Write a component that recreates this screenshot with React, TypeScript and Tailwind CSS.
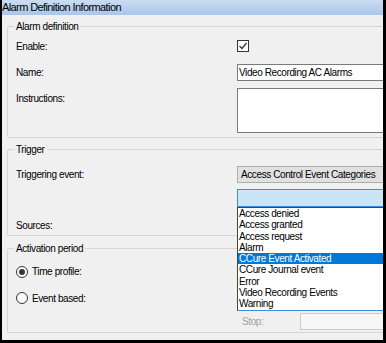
const events = [
  "Access denied",
  "Access granted",
  "Access request",
  "Alarm",
  "CCure Event Activated",
  "CCure Journal event",
  "Error",
  "Video Recording Events",
  "Warning",
];

const font = "font-['Liberation_Sans',Arial,sans-serif]";

const Radio = ({ checked }: { checked?: boolean }) => (
  <span className="w-[12px] h-[12px] rounded-full border border-[#333] bg-white flex items-center justify-center shrink-0">
    {checked && <span className="w-[6px] h-[6px] rounded-full bg-[#333]" />}
  </span>
);

const Legend = ({ children }: { children: React.ReactNode }) => (
  <legend className="ml-[-2px] px-[2px] leading-[13px]">{children}</legend>
);

export default function App() {
  return (
    <div className={`w-[386px] h-[343px] bg-black pl-[2px] pr-[3px] pb-[3px] ${font} text-[10px] tracking-[-0.4px] text-black`}>
      <div className="w-full h-full bg-[#f0f0f0] overflow-hidden flex flex-col">
        <div className="h-[15px] shrink-0 bg-gradient-to-b from-[#cadcf1] to-[#a9c6e9] text-[11px] tracking-[-0.6px] leading-[15px]">
          Alarm Definition Information
        </div>

        <fieldset className="mt-[5px] ml-[5px] w-[420px] shrink-0 border border-[#d5d5d5] rounded-[2px] pl-[8px] pb-[4px]">
          <Legend>Alarm definition</Legend>
          <div className="flex items-center h-[26px]">
            <span className="w-[221px]">Enable:</span>
            <span className="w-[12px] h-[12px] border border-[#333] bg-white flex items-center justify-center">
              <svg width="10" height="10" viewBox="0 0 10 10">
                <polyline points="1.5,5 4,7.5 8.5,2" fill="none" stroke="#333" strokeWidth="1.2" />
              </svg>
            </span>
          </div>
          <div className="flex items-start h-[24px] pt-[5px]">
            <span className="w-[221px] leading-[17px]">Name:</span>
            <div className="w-[180px] h-[17px] border border-[#7a7a7a] bg-white px-[1px] leading-[15px]">
              Video Recording AC Alarms
            </div>
          </div>
          <div className="flex items-start pt-[5px]">
            <span className="w-[221px] pt-[4px] leading-[13px]">Instructions:</span>
            <div className="w-[180px] h-[45px] border border-[#7a7a7a] bg-white" />
          </div>
        </fieldset>

        <fieldset className="mt-[5px] ml-[5px] w-[420px] shrink-0 border border-[#d5d5d5] rounded-[2px] pl-[8px]">
          <Legend>Trigger</Legend>
          <div className="flex items-start pt-[10px]">
            <span className="w-[221px] leading-[17px]">Triggering event:</span>
            <div className="w-[180px] h-[17px] border border-[#adadad] bg-[#e1e1e1] pl-[3px] leading-[15px]">
              Access Control Event Categories
            </div>
          </div>
          <div className="flex items-start mt-[6px] h-[46px]">
            <span className="w-[221px] mt-[30px] leading-[13px]">Sources:</span>
            <div className="relative z-10">
              <div className="w-[180px] h-[18px] border border-[#3c8ce0] bg-[#cce4f7]" />
              <ul className="absolute top-[18px] left-0 w-[180px] border border-[#444] border-b-[#3c8ce0] bg-white">
                {events.map((e) => (
                  <li
                    key={e}
                    className={`h-[11.3px] leading-[11.3px] pl-[1px] ${e === "CCure Event Activated" ? "bg-[#0078d7] text-white" : ""}`}
                  >
                    {e}
                  </li>
                ))}
              </ul>
            </div>
          </div>
        </fieldset>

        <fieldset className="mt-[6px] ml-[5px] w-[420px] shrink-0 border border-[#d5d5d5] rounded-[2px] pl-[8px] pb-[2px]">
          <Legend>Activation period</Legend>
          <div className="flex items-center gap-[4px] h-[33px]">
            <Radio checked />
            <span>Time profile:</span>
          </div>
          <div className="flex items-center gap-[4px] h-[20px]">
            <Radio />
            <span>Event based:</span>
          </div>
          <div className="flex items-center pt-[5px]">
            <span className="w-[221px]" />
            <span className="ml-[5px] w-[58px] text-[#a0a0a0]">Stop:</span>
            <div className="w-[120px] h-[17px] border border-[#cccccc] bg-[#f7f7f7]" />
          </div>
        </fieldset>
      </div>
    </div>
  );
}
